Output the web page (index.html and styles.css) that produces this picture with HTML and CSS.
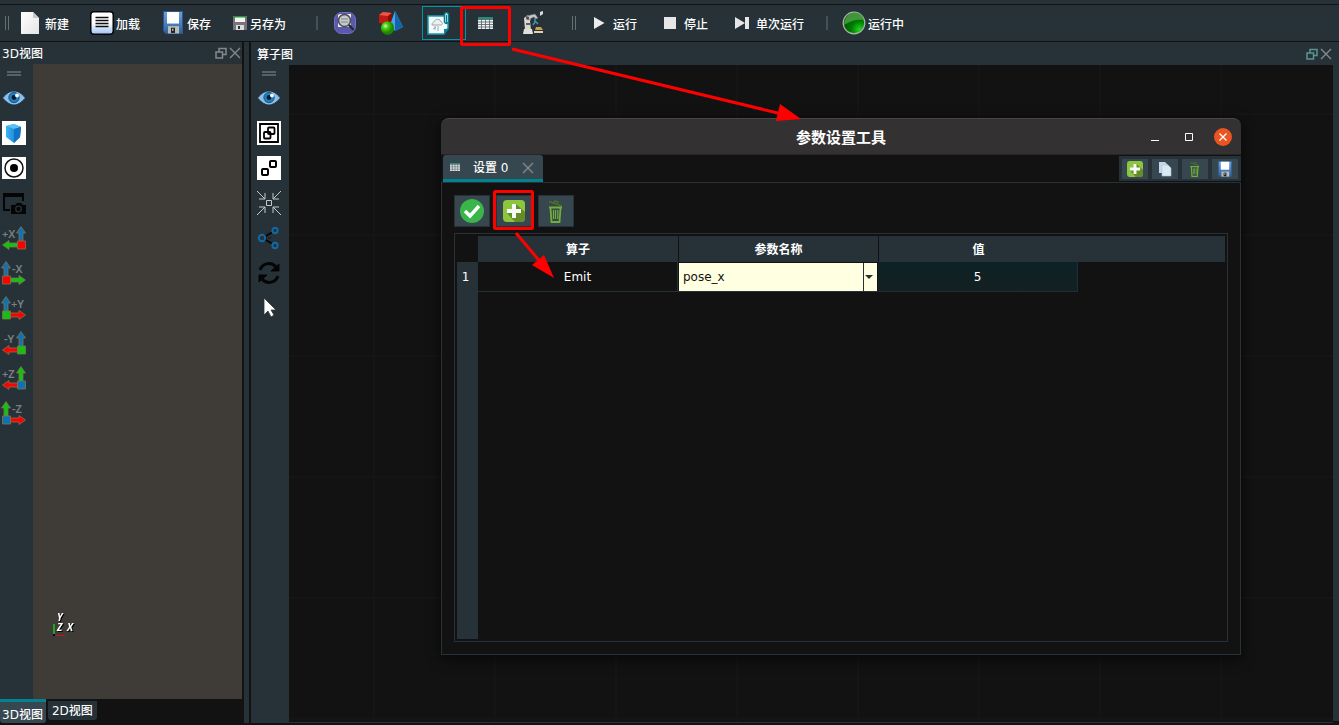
FILE: index.html
```html
<!DOCTYPE html>
<html lang="zh-CN">
<head>
<meta charset="utf-8">
<title>参数设置工具</title>
<link rel="stylesheet" href="styles.css">
</head>
<body>
<svg class="defs" aria-hidden="true">
  <defs>
    <linearGradient id="paper" x2="1" y2="1"><stop offset="0" stop-color="#fff"/><stop offset="1" stop-color="#e4e4e4"/></linearGradient>
    <linearGradient id="blueGlow" x2="0" y2="1"><stop offset=".5" stop-color="#fff"/><stop offset="1" stop-color="#9cc4f4"/></linearGradient>
    <linearGradient id="cubeBlue" x2="1"><stop offset="0" stop-color="#3bb4f5"/><stop offset="1" stop-color="#0b6fc4"/></linearGradient>
    <linearGradient id="floppyBlue" x2="0" y2="1"><stop offset="0" stop-color="#6fa3dd"/><stop offset="1" stop-color="#2f5f9e"/></linearGradient>
    <radialGradient id="ball" cx=".35" cy=".35"><stop offset="0" stop-color="#d8ffb0"/><stop offset=".4" stop-color="#4fd014"/><stop offset="1" stop-color="#1c8a00"/></radialGradient>
    <radialGradient id="led" cx=".75" cy=".8" r=".75"><stop offset="0" stop-color="#22d422"/><stop offset=".5" stop-color="#007d00"/><stop offset="1" stop-color="#005400"/></radialGradient>
    <symbol id="eye" viewBox="0 0 24 16">
      <path d="M.5 8C5 2.500 8.500 1 12 1s7 1.500 11.500 7C19 13 15.500 15 12 15S5 13 .5 8z" fill="#8cc0ea" stroke="#1c2f3d"/>
      <circle cx="12" cy="7.500" r="5.200" fill="#1f7fc4" stroke="#17456a" stroke-width=".8"/><circle cx="12" cy="7.500" r="2.400" fill="#0a1c2b"/><circle cx="15" cy="5.500" r="1.900" fill="#fff"/>
    </symbol>
    <symbol id="float" viewBox="0 0 12 12"><path d="M4 4.500V1.500h7v6H8M1 5h6.500v6H1z" fill="none" stroke="currentColor" stroke-width="1.500"/></symbol>
    <symbol id="cross" viewBox="0 0 12 12"><path d="M1 1l10 10M11 1L1 11" fill="none" stroke="currentColor" stroke-width="1.400"/></symbol>
    <symbol id="floppy" viewBox="0 0 20 22" preserveAspectRatio="none">
      <path d="M1 .5h18.500v21H3L.5 19V.5z" fill="url(#floppyBlue)" stroke="#2c5791"/><path d="M4 1h12v11H4z" fill="#fff"/>
      <path d="M5 14.500h11v7H5z" fill="#b9bdb8"/><path d="M8 16h4v5H8z" fill="#222"/><path d="M9 17h1.500v2H9z" fill="#bbb"/>
    </symbol>
    <symbol id="sheet" viewBox="0 0 15 12" preserveAspectRatio="none">
      <path d="M0 0h15v12H0z" fill="#f2f2f2"/><path d="M0 0h15v2.200H0z" fill="#1f8e76"/>
      <path d="M0 2.500h15M0 5h15M0 7.500h15M0 10h15M3.500 2v10M7.500 2v10M11.500 2v10" stroke="#4e5d63" stroke-width=".8" fill="none"/>
    </symbol>
    <symbol id="plus" viewBox="0 0 22 22">
      <rect width="22" height="22" rx="4" fill="#8cc63f"/><path d="M13 4l9 8v6q0 4-4 4h-6l-8-9 6-4z" fill="#638d28"/>
      <path d="M9 4h4v5h5v4h-5v5H9v-5H4V9h5z" fill="#f8f8f8"/>
    </symbol>
    <symbol id="trash" viewBox="0 0 16 24">
      <path d="M1 2.500l13 4.500M6 4l1-2 4 1.500" fill="none" stroke="#4b702b" stroke-width="1.500"/>
      <path d="M1 8.500h13M2.500 9l1 14h8l1-14" fill="none" stroke="#72ae38" stroke-width="1.800"/><path d="M5.500 11v9M7.500 11v9M9.800 11v9" stroke="#72ae38" stroke-width="1.200"/>
    </symbol>
    <symbol id="shaft" viewBox="0 0 10 16"><path d="M5 .5L9.500 7H7v9H3V7H.5z" fill="currentColor" stroke="#80734d" stroke-width=".8"/></symbol>
    <symbol id="axesA" viewBox="0 0 28 28">
      <use class="c1" href="#shaft" x="16" y="2" width="10" height="16"/>
      <use class="c2" href="#shaft" width="10" height="16" transform="translate(2 26) rotate(-90)"/>
      <path class="c3" d="M17.500 17h8v8h-8z" fill="currentColor" stroke="#80734d" stroke-width=".8"/>
    </symbol>
    <symbol id="axesB" viewBox="0 0 28 28">
      <use class="c1" href="#shaft" x="1" y="2" width="10" height="16"/>
      <use class="c2" href="#shaft" width="10" height="16" transform="translate(26 16) rotate(90)"/>
      <path class="c3" d="M2.500 17h8v8h-8z" fill="currentColor" stroke="#80734d" stroke-width=".8"/>
    </symbol>
  </defs>
</svg>

<header class="toolbar">
  <span class="grip"></span>
  <div class="group files">
    <button class="tool"><svg class="i24" viewBox="0 0 24 24"><path d="M2 1h12l6 6v16H2z" fill="url(#paper)"/><path d="M14 1v6h6z" fill="#c8c8c8"/></svg><span>新建</span></button>
    <button class="tool"><svg class="i24" viewBox="0 0 24 24"><rect x=".75" y=".75" width="22.500" height="22.500" rx="3" fill="url(#blueGlow)" stroke="#050505" stroke-width="1.500"/><path d="M5.500 6.500h13M5.500 9.500h13M5.500 12.500h13M5.500 15.500h13" stroke="#111" stroke-width="1.600"/></svg><span>加载</span></button>
    <button class="tool"><svg class="i24"><use href="#floppy" x="2" y="0" width="20" height="23"/></svg><span>保存</span></button>
    <button class="tool"><svg class="i16" viewBox="0 0 16 16"><path d="M1 1h14v14H1z" fill="#77737a"/><path d="M3 1h10v6H3z" fill="#f4f4f4"/><path d="M2 1h12v1.500H2z" fill="#22943f"/><path d="M4 10h8v5H4z" fill="#ddd"/><path d="M6 11h2v3H6z" fill="#333"/></svg><span>另存为</span></button>
  </div>
  <span class="divider"></span>
  <div class="group views">
    <button class="cell" aria-label="查找"><svg class="i24" viewBox="0 0 24 24"><rect x="1.500" y="1.500" width="21" height="21" rx="7" fill="#5b58ae" stroke="#7471bd"/><path d="M5 4l2-1h11v13H5z" fill="#f2efe6"/><circle cx="11.500" cy="9.500" r="6" fill="#c4c9cb" stroke="#494c50" stroke-width="1.600"/><path d="M8 8h7M8 11h7" stroke="#7e868b"/><path d="M16 14l4.500 5" stroke="#282a2d" stroke-width="2.500"/></svg></button>
    <button class="cell" aria-label="几何体"><svg class="i26" viewBox="0 0 26 26"><path d="M1 5l4-3 9 1v8l-4 3-9-1z" fill="#c21a12"/><path d="M1 5l4-3 9 1-4 3z" fill="#ed5548"/><path d="M10 6l4-3v8l-4 3z" fill="#850c08"/><path d="M17 1l8 16-8 4-5-6z" fill="#47a4e8"/><path d="M17 1l8 16-8 4z" fill="#1565ab"/><circle cx="9.500" cy="18" r="6.700" fill="url(#ball)"/></svg></button>
    <button class="cell active" aria-label="图编辑"><svg class="i24" viewBox="0 0 24 24"><path d="M1 5h20v12l-4 6H1z" fill="#f4fbfd" stroke="#17a0b5" stroke-width="1.500"/><path d="M17 23v-5h5z" fill="#0e7f91"/><path d="M5 14c0-3 2-3 2-3 1-4 7-3 7 0 2 0 2 3 0 3z" fill="#eee" stroke="#9cabb0"/><path d="M8 15v4M11 15v5M6 18l3-2" stroke="#9cabb0"/><path d="M17.500 3v8q1.500 3 4 0V3q-2-3-4 0z" fill="#d7f3f8" stroke="#057b8e" stroke-width="1.600"/><path d="M19.500 4v8" stroke="#057b8e"/></svg></button>
    <button class="cell sheet-cell" aria-label="参数设置"><svg class="i-sheet"><use href="#sheet"/></svg></button>
    <button class="cell" aria-label="机械臂"><svg class="i24" viewBox="0 0 24 24"><path d="M4 19L3 7l4-3 3 3-1 3 1 9z" fill="#ddd8cf"/><path d="M5 5l9-2 3 4-2 1-2-2-6 3z" fill="#c7c9c8" stroke="#5f6468" stroke-width=".6"/><circle cx="6.500" cy="7" r="1.700" fill="#4c5459"/><path d="M3 18h8l1 5H2z" fill="#e4e0d8"/><path d="M5 12h4v2H5z" fill="#5d6265"/><path d="M14 7v4l-2 3M14 10l3 3" fill="none" stroke="#4891ae" stroke-width="1.500"/><path d="M19 1l3-1v3l-3 2z" fill="#ddd"/><path d="M15 16h5l2 3h-8z" fill="#c9a04a"/><path d="M13 20h9v2h-9z" fill="#dfd4b5"/></svg></button>
  </div>
  <span class="grip grip-mid"></span>
  <div class="group runs">
    <button class="tool wide"><svg class="i12" viewBox="0 0 12 14"><path d="M1 1l10.500 6L1 13z" fill="#ececec"/></svg><span>运行</span></button>
    <button class="tool wide"><svg class="i12" viewBox="0 0 12 14"><path d="M0 1h12v12H0z" fill="#e6e6e6"/></svg><span>停止</span></button>
    <button class="tool step"><svg class="i14" viewBox="0 0 14 14"><path d="M0 1l10 6-10 6zM10 1h4v12h-4z" fill="#e6e6e6"/></svg><span>单次运行</span></button>
  </div>
  <span class="divider divider-end"></span>
  <div class="status"><svg class="i24" viewBox="0 0 24 24"><circle cx="12" cy="12" r="10.800" fill="url(#led)" stroke="#a9b6a8" stroke-width="1.200"/><path d="M2 14C3-2 21-2 22 9c-7-1-12 0-20 5z" fill="#53a34b" opacity=".8"/></svg><span>运行中</span></div>
</header>

<main class="workspace">
  <section class="dock left">
    <div class="dock-title"><h2>3D视图</h2><button aria-label="浮动"><svg class="i12s"><use href="#float"/></svg></button><button aria-label="关闭"><svg class="i12s"><use href="#cross"/></svg></button></div>
    <div class="dock-body">
      <nav class="side">
        <span class="grip-h"></span>
        <button aria-label="显示"><svg class="eye"><use href="#eye"/></svg></button>
        <button aria-label="立方体"><svg class="i24" viewBox="0 0 24 24"><path d="M0 0h24v24H0z" fill="#fff"/><path d="M4 5l8-2 7 3-1 10-6 6-8-6z" fill="url(#cubeBlue)"/><path d="M4 5l8-2 7 3-7 2z" fill="#58c0f3"/><path d="M12 8l7-2-1 10-6 6z" fill="#1272c5"/></svg></button>
        <button aria-label="中心"><svg class="i24" viewBox="0 0 24 24"><path d="M0 1h24v22H0z" fill="#fff"/><circle cx="12" cy="12" r="9" fill="none" stroke="#111" stroke-width="1.500"/><circle cx="12" cy="12" r="4" fill="#000"/></svg></button>
        <button aria-label="截图"><svg class="i24" viewBox="0 0 24 24"><path d="M8 19H2V3h19v7M2 5h19" fill="none" stroke="#050505" stroke-width="2"/><path d="M9 14h4l2-2h4l2 2h3v9H9z" fill="#050505"/><circle cx="16.500" cy="18" r="2.800" fill="none" stroke="#263238" stroke-width="1.300"/></svg></button>
        <button aria-label="+X"><svg class="axes px"><use href="#axesA"/><text x="2" y="14">+X</text></svg></button>
        <button aria-label="-X"><svg class="axes nx"><use href="#axesB"/><text x="12" y="14">-X</text></svg></button>
        <button aria-label="+Y"><svg class="axes py"><use href="#axesB"/><text x="11" y="14">+Y</text></svg></button>
        <button aria-label="-Y"><svg class="axes ny"><use href="#axesA"/><text x="4" y="14">-Y</text></svg></button>
        <button aria-label="+Z"><svg class="axes pz"><use href="#axesA"/><text x="2" y="14">+Z</text></svg></button>
        <button aria-label="-Z"><svg class="axes nz"><use href="#axesB"/><text x="12" y="14">-Z</text></svg></button>
      </nav>
      <div class="scene">
        <svg class="triad" viewBox="0 0 28 28"><path d="M1 14v10" stroke="#1ea51e" stroke-width="2"/><path d="M1 25.500h11" stroke="#d01010"/><path d="M0 24h2v2H0z" fill="#00003a"/><text x="4" y="11">Y</text><text x="4" y="21">Z</text><text x="14" y="21">X</text></svg>
      </div>
    </div>
    <div class="view-tabs"><button class="current">3D视图</button><button>2D视图</button></div>
  </section>
  <div class="splitter"></div>
  <section class="dock right">
    <div class="dock-title"><h2>算子图</h2><button class="lit" aria-label="浮动"><svg class="i12s"><use href="#float"/></svg></button><button aria-label="关闭"><svg class="i12s"><use href="#cross"/></svg></button></div>
    <div class="dock-body">
      <nav class="side">
        <span class="grip-h"></span>
        <button aria-label="显示"><svg class="eye"><use href="#eye"/></svg></button>
        <button aria-label="组合"><svg class="i24" viewBox="0 0 24 24"><path d="M0 0h24v24H0z" fill="#fff"/><path d="M3 3h18v18H3z" fill="none" stroke="#000" stroke-width="1.800"/><rect x="11" y="6.500" width="6.500" height="6.500" rx="1" fill="none" stroke="#000" stroke-width="1.800"/><rect x="7" y="11" width="6.500" height="6.500" rx="1" fill="none" stroke="#000" stroke-width="1.800"/></svg></button>
        <button aria-label="拆分"><svg class="i24" viewBox="0 0 24 24"><path d="M0 0h24v24H0z" fill="#fff"/><rect x="13" y="5" width="6" height="6" rx="1" fill="none" stroke="#000" stroke-width="2"/><rect x="5" y="13" width="6" height="6" rx="1" fill="none" stroke="#000" stroke-width="2"/></svg></button>
        <button aria-label="适应"><svg class="i24" viewBox="0 0 24 24"><path d="M9.500 9.500h5v5h-5zM0 0l8 8M24 0l-8 8M0 24l8-8M24 24l-8-8M8 2v6H2M16 2v6h6M8 22v-6H2M16 22v-6h6" fill="none" stroke="#c4c9cb"/></svg></button>
        <button aria-label="连接"><svg class="i24" viewBox="0 0 24 24"><path d="M7 11l9-5M7 13l9 5" stroke="#050505" stroke-width="2"/><path d="M9 12h5" stroke="#050505" stroke-dasharray="1 1"/><g fill="none" stroke="#1269a6" stroke-width="1.900"><circle cx="5" cy="12" r="3.200"/><circle cx="18" cy="4.500" r="2.700"/><circle cx="18" cy="19.500" r="2.700"/></g></svg></button>
        <button aria-label="刷新"><svg class="i24" viewBox="0 0 24 24"><path d="M3 9C6 1 15 1 19 6M21 15C18 23 9 23 5 18" fill="none" stroke="#050505" stroke-width="3"/><path d="M22 3v7h-8zM2 21v-7h8z" fill="#050505" stroke="#050505"/></svg></button>
        <button aria-label="选择"><svg class="i24" viewBox="0 0 24 24"><path d="M7 2v17l4-4 3 6 3-2-3-5h5z" fill="#fff" stroke="#333" stroke-width=".8"/></svg></button>
      </nav>
      <div class="canvas"></div>
    </div>
  </section>
</main>

<section class="dialog" role="dialog" aria-labelledby="dialog-title">
  <header class="dialog-head">
    <h1 id="dialog-title">参数设置工具</h1>
    <div class="window-buttons">
      <button aria-label="最小化"><svg class="i10" viewBox="0 0 10 10"><path d="M1 8.500h8" stroke="#fff"/></svg></button>
      <button aria-label="最大化"><svg class="i10" viewBox="0 0 10 10"><path d="M1.500 1.500h7v7h-7z" fill="none" stroke="#fff"/></svg></button>
      <button class="close" aria-label="关闭"><svg class="i10" viewBox="0 0 10 10"><path d="M1.500 1.500l7 7M8.500 1.500l-7 7" stroke="#fff" stroke-width="1.300"/></svg></button>
    </div>
  </header>
  <div class="tab-row">
    <div class="tab"><svg class="i10w"><use href="#sheet"/></svg><span>设置 0</span><button aria-label="关闭标签"><svg class="i12s"><use href="#cross"/></svg></button></div>
    <div class="tab-tools">
      <button aria-label="添加"><svg class="i16"><use href="#plus"/></svg></button>
      <button aria-label="复制"><svg class="i16" viewBox="0 0 16 16"><path d="M2 1h6l3 3v8H2z" fill="#c4d6ea"/><path d="M5 4h6l3 3v8H5z" fill="#dce7f4" stroke="#abc1dc" stroke-width=".6"/></svg></button>
      <button aria-label="删除"><svg class="i16"><use href="#trash"/></svg></button>
      <button aria-label="保存"><svg class="i16"><use href="#floppy" x="1" width="14" height="16"/></svg></button>
    </div>
  </div>
  <div class="dialog-body">
    <div class="actions">
      <button aria-label="确认"><svg class="i24" viewBox="0 0 24 24"><circle cx="12" cy="12" r="12" fill="#39b54a"/><path d="M5 12l5 5 9-10" fill="none" stroke="#fff" stroke-width="3.400"/></svg></button>
      <button aria-label="添加参数"><svg class="i22"><use href="#plus"/></svg></button>
      <button aria-label="删除参数"><svg class="i24"><use href="#trash"/></svg></button>
    </div>
    <div class="frame">
      <table>
        <colgroup><col class="c-num"><col class="c-col"><col class="c-col"><col class="c-col"><col></colgroup>
        <thead><tr><td></td><th scope="col">算子</th><th scope="col">参数名称</th><th scope="col">值</th><th class="rest"></th></tr></thead>
        <tbody>
          <tr><th scope="row">1</th><td class="op">Emit</td>
            <td class="pick"><select aria-label="参数名称"><option>pose_x</option></select><svg viewBox="0 0 8 5"><path d="M0 1h8L4 5z" fill="#263238"/></svg></td>
            <td class="val">5</td><td></td></tr>
          <tr class="filler"><th></th><td colspan="4"></td></tr>
        </tbody>
      </table>
    </div>
  </div>
</section>

<svg class="marks" aria-hidden="true">
  <g fill="none" stroke="#f00" stroke-width="3">
    <rect x="461.500" y="7.500" width="48" height="37" rx="1"/>
    <rect x="494.500" y="191.500" width="38" height="37" rx="1"/>
    <path d="M512 49L782 114M516 233l26 31"/>
  </g>
  <path d="M801 119l-25 2 4-17zM554 278l-22-13 12-10z" fill="#f00"/>
</svg>
</body>
</html>
```

FILE: styles.css
```css
:root {
  --panel: #263238;
  --dark: #121212;
  --raised: #37474f;
  --teal: #00838f;
}

* { box-sizing: border-box; }

body {
  margin: 0;
  height: 100vh;
  display: flex;
  flex-direction: column;
  overflow: hidden;
  background: var(--dark);
  color: #fff;
  font: 500 12px/16px "DejaVu Sans", "Noto Sans CJK SC", sans-serif;
}

button, select { font: inherit; color: inherit; }
button { background: none; border: 0; padding: 0; }
h1, h2 { margin: 0; font: inherit; }
svg { display: block; flex: none; }

.defs { position: absolute; width: 0; height: 0; }
.i26 { width: 26px; height: 26px; }
.i24 { width: 24px; height: 24px; }
.i22 { width: 22px; height: 22px; }
.i16 { width: 16px; height: 16px; }
.i14 { width: 14px; height: 14px; }
.i12 { width: 12px; height: 14px; }
.i12s { width: 12px; height: 12px; }
.i10 { width: 10px; height: 10px; }
.i10w { width: 10px; height: 8px; }
.i-sheet { width: 15px; height: 12px; }
.eye { width: 24px; height: 16px; }

/* Main toolbar */
.toolbar {
  flex: none;
  display: flex;
  align-items: center;
  height: 42px;
  padding: 5px 0 0 5px;
  background: linear-gradient(var(--dark), var(--dark)) 0 4px / 100% 1px no-repeat var(--panel);
  border-bottom: 1px solid var(--dark);
}
.grip { width: 4px; height: 14px; border: solid #667073; border-width: 0 1px; }
.grip-mid { margin-left: 16px; }
.group { display: flex; align-items: center; }
.tool, .status { display: flex; align-items: center; gap: 2px; white-space: nowrap; }
.tool span, .status span { padding-top: 3px; }
.files { gap: 21px; margin-left: 10px; }
.divider { width: 2px; height: 14px; margin-left: 30px; background: #455157; }
.views { margin-left: 4px; }
.cell { width: 46px; height: 34px; display: flex; align-items: center; justify-content: center; }
.cell.active { width: 44px; margin-left: 8px; padding-right: 10px; border: 1px solid #0097a7; }
.cell.sheet-cell { width: 44px; padding-right: 5px; }
.cell:last-child { width: 46px; }
.runs { gap: 27px; margin-left: 17px; }
.tool.wide { gap: 8px; }
.tool.step { gap: 7px; }
.divider-end { margin-left: 22px; }
.status { margin-left: 14px; }

/* Docks */
.workspace { flex: 1; min-height: 0; display: flex; padding: 0 6px 2px 0; background: linear-gradient(var(--panel), var(--panel)) 100% 0 / 6px calc(100% - 4px) no-repeat; }
.dock { display: flex; flex-direction: column; min-height: 0; }
.left { flex: none; width: 242px; }
.right { flex: 1; min-width: 0; }
.splitter { flex: none; width: 5px; margin: 0 2px; background: var(--panel); }
.dock-title { flex: none; display: flex; align-items: center; gap: 2px; height: 22px; padding: 0 1px 0 2px; background: var(--panel); color: #84898b; }
.dock-title h2 { flex: 1; padding-top: 2px; color: #fff; }
.right .dock-title { height: 23px; padding-left: 6px; }
.dock-title .lit { color: #5d9294; }
.dock-body { flex: 1; min-height: 0; display: flex; }
.side { flex: none; width: 33px; display: flex; flex-direction: column; padding-top: 7px; background: var(--panel); }
.right .side { width: 38px; padding-top: 6px; }
.grip-h { width: 14px; height: 5px; margin: 0 0 4px 7px; border: solid #566065; border-width: 2px 0; }
.side button { flex: none; width: 28px; height: 35px; display: flex; align-items: center; justify-content: center; }
.right .grip-h { margin-left: 11px; }
.right .side button { width: 36px; }
.scene { flex: 1; display: flex; align-items: flex-end; padding: 0 0 61px 20px; background: #3f3c38; }
.triad { width: 28px; height: 28px; }
.triad text { font: italic bold 10px "Noto Sans", sans-serif; fill: #fff; filter: drop-shadow(1px 1px 0 #000); }
.axes { width: 28px; height: 28px; }
.axes text { font: 600 11px "Noto Sans", sans-serif; fill: #7a8083; }
.c1 { color: var(--up); }
.c2 { color: var(--across); }
.c3 { color: var(--origin); }
.px, .nx { --up: #0e72b5; --across: #15c015; --origin: #f00; }
.py, .ny { --up: #0e72b5; --across: #f00; --origin: #15c015; }
.pz, .nz { --up: #15c015; --across: #f00; --origin: #0e72b5; }

.view-tabs { flex: none; display: flex; align-items: flex-start; gap: 2px; height: 24px; }
.view-tabs button { height: 19px; margin-top: 2px; padding: 1px 4px 0; background: var(--panel); border-radius: 0 0 3px 3px; }
.view-tabs .current { height: 24px; margin-top: 0; padding: 4px 3px 0 2px; background: var(--raised); border-top: 3px solid var(--teal); }

.canvas {
  flex: 1;
  border-bottom: 1px solid var(--panel);
  background:
    linear-gradient(90deg, #151515 2px, transparent 2px) 84px 0 / 121px 100%,
    linear-gradient(#151515 2px, transparent 2px) 0 48px / 100% 121px;
}

/* Settings window floating over the graph */
.dialog {
  position: absolute;
  left: 441px;
  top: 118px;
  width: 800px;
  height: 537px;
  display: flex;
  flex-direction: column;
  background: var(--dark);
  border-radius: 8px 8px 0 0;
  box-shadow: 0 3px 14px #000a;
}
.dialog-head { flex: none; display: grid; grid-template-columns: 1fr auto 1fr; align-items: center; height: 37px; background: #343132; border-top: 1px solid #494647; border-bottom: 1px solid #262425; border-radius: 8px 8px 0 0; }
.dialog-head h1 { grid-column: 2; padding-top: 2px; font-size: 15px; font-weight: 700; line-height: 20px; }
.window-buttons { display: flex; justify-content: flex-end; gap: 16px; padding-right: 9px; }
.window-buttons button { width: 18px; height: 18px; display: flex; align-items: center; justify-content: center; border-radius: 50%; }
.window-buttons .close { background: #e95420; }
.tab-row { flex: none; display: flex; justify-content: space-between; height: 27px; padding: 0 0 0 2px; }
.tab { display: flex; align-items: center; width: 100px; padding: 0 9px 0 7px; background: var(--raised); border-bottom: 3px solid var(--teal); border-radius: 3px 3px 0 0; }
.tab span { flex: 1; padding: 2px 0 0 13px; }
.tab button { padding-top: 2px; color: #84898b; }
.tab-tools { display: flex; gap: 4px; margin: 1px 0; padding: 3px; background: var(--panel); }
.tab-tools button { width: 26px; height: 20px; display: flex; align-items: center; justify-content: center; background: var(--raised); }
.dialog-body { flex: 1; min-height: 0; display: flex; flex-direction: column; gap: 6px; padding: 12px; border: 1px solid var(--panel); }
.actions { display: flex; gap: 6px; }
.actions button { width: 36px; height: 32px; display: flex; align-items: center; justify-content: center; background: var(--raised); border: 1px solid var(--panel); }
.frame { flex: 1; display: flex; padding: 2px; border: 1px solid var(--panel); }

table { width: 100%; height: 100%; table-layout: fixed; border-collapse: separate; border-spacing: 0; text-align: center; }
th, td { padding: 0; font-weight: 500; }
.c-num { width: 21px; }
.c-col { width: 200px; }
thead tr { height: 26px; }
thead th { padding-top: 2px; background: var(--panel); border-left: 1px solid var(--dark); font-weight: 700; }
thead td + th, thead .rest { border: 0; }
tbody tr { height: 30px; }
tbody th { padding-right: 4px; background: var(--panel); }
tbody .filler { height: auto; }
.op, .val { border: solid var(--panel); border-width: 0 1px 1px 0; }
.val { background: linear-gradient(#0d2225, #142022); border-color: #173137; }
.pick { position: relative; border-bottom: 1px solid var(--panel); }
.pick select { display: block; width: 198px; height: 28px; margin-left: 1px; padding: 0 4px; appearance: none; border: 0; border-radius: 0; background: linear-gradient(#263238, #263238) calc(100% - 13px) 0 / 1px 100% no-repeat #ffffe1; color: #111; }
.pick svg { position: absolute; right: 5px; top: 12px; width: 8px; height: 5px; pointer-events: none; }

.marks { position: absolute; left: 0; top: 0; width: 100%; height: 100%; pointer-events: none; }
```
